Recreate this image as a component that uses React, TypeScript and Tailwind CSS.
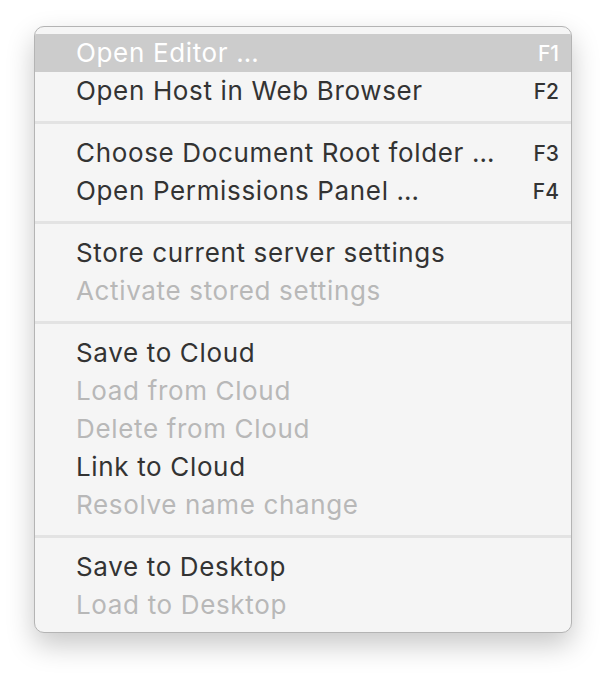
import React from "react";

type Item = { label: string; key?: string; disabled?: boolean; active?: boolean };

const groups: Item[][] = [
  [
    { label: "Open Editor …", key: "F1", active: true },
    { label: "Open Host in Web Browser", key: "F2" },
  ],
  [
    { label: "Choose Document Root folder …", key: "F3" },
    { label: "Open Permissions Panel …", key: "F4" },
  ],
  [
    { label: "Store current server settings" },
    { label: "Activate stored settings", disabled: true },
  ],
  [
    { label: "Save to Cloud" },
    { label: "Load from Cloud", disabled: true },
    { label: "Delete from Cloud", disabled: true },
    { label: "Link to Cloud" },
    { label: "Resolve name change", disabled: true },
  ],
  [
    { label: "Save to Desktop" },
    { label: "Load to Desktop", disabled: true },
  ],
];

function Row({ item }: { item: Item }) {
  const color = item.active
    ? "text-white bg-[#cccccc]"
    : item.disabled
    ? "text-[#b8b8b8]"
    : "text-[#333333]";
  return (
    <div className={`flex h-[38px] items-center justify-between pl-[41px] pr-[12px] ${color}`}>
      <span className="text-[26px] leading-none tracking-[0.65px]">{item.label}</span>
      {item.key && (
        <span className="text-[21px] font-medium leading-none">{item.key}</span>
      )}
    </div>
  );
}

export default function App() {
  return (
    <div
      className="w-[606px] h-[674px] bg-white pt-[26px] pl-[34px]"
      style={{ fontFamily: "Inter, 'Noto Sans', sans-serif" }}
    >
      <div className="w-[538px] rounded-[10px] bg-[#f5f5f5] border border-[#b4b4b4] pt-[7px] pb-[8px] overflow-hidden shadow-[0_12px_28px_rgba(0,0,0,0.22)]">
        {groups.map((g, gi) => (
          <div key={gi}>
            {gi > 0 && (
              <div className="flex h-[24px] items-center">
                <div className="h-[3px] w-full bg-[#e3e3e3]" />
              </div>
            )}
            {g.map((it, i) => (
              <Row key={i} item={it} />
            ))}
          </div>
        ))}
      </div>
    </div>
  );
}
